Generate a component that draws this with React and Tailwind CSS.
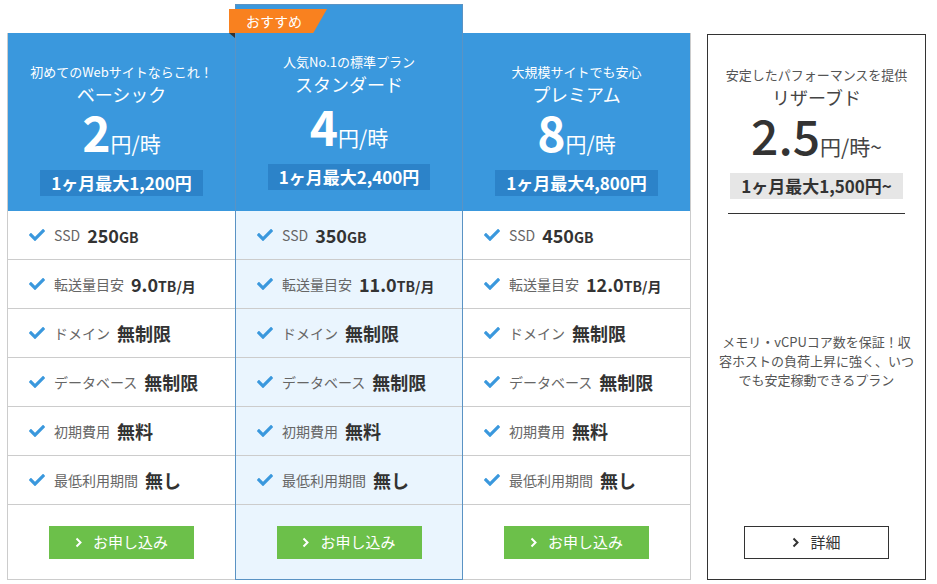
import React from 'react';
import { FaCheck } from 'react-icons/fa';

const plans = [
  { key: 'basic', sub: '初めてのWebサイトならこれ！', name: 'ベーシック', price: '2', month: '1,200', ssd: '250', transfer: '9.0' },
  { key: 'standard', sub: '人気No.1の標準プラン', name: 'スタンダード', price: '4', month: '2,400', ssd: '350', transfer: '11.0', featured: true },
  { key: 'premium', sub: '大規模サイトでも安心', name: 'プレミアム', price: '8', month: '4,800', ssd: '450', transfer: '12.0' },
];

function features(plan) {
  return [
    { label: 'SSD', value: plan.ssd, unit: 'GB' },
    { label: '転送量目安', value: plan.transfer, unit: 'TB/月' },
    { label: 'ドメイン', value: '無制限' },
    { label: 'データベース', value: '無制限' },
    { label: '初期費用', value: '無料' },
    { label: '最低利用期間', value: '無し' },
  ];
}

function Chevron({ className }) {
  return (
    <svg width="7" height="11" viewBox="0 0 7 11" className={className}>
      <polyline points="1.5,1.5 5.5,5.5 1.5,9.5" fill="none" stroke="currentColor" strokeWidth="2" />
    </svg>
  );
}

function PlanHeader({ plan }) {
  return (
    <div
      className={`flex flex-col items-center bg-[#3a98dd] text-white ${plan.featured ? 'h-[206px] pt-[47px]' : 'h-[178px] pt-[29px]'}`}
    >
      <p className="text-[13px] leading-[20px]">{plan.sub}</p>
      <p className="text-[18px] leading-[24px]">{plan.name}</p>
      <div className={`flex items-baseline ${plan.featured ? 'mt-[5px]' : 'mt-[1px]'}`}>
        <span className="text-[48px] leading-[48px] font-bold">{plan.price}</span>
        <span className="text-[21px] leading-none">円/時</span>
      </div>
      <div className="mt-[15px] h-[26px] px-[11px] bg-[#2c83c9] text-[17px] leading-[26px] font-bold">
        1ヶ月最大{plan.month}円
      </div>
    </div>
  );
}

function FeatureRow({ item }) {
  return (
    <div className="h-[49px] border-b border-[#cccccc] flex items-center pl-[21px]">
      <FaCheck className="text-[#3a98dd] w-[16px] h-[16px]" />
      <span className="ml-[9px] text-[14px] text-[#666666]">{item.label}</span>
      <span className="ml-[7px] text-[18px] font-bold text-[#333333]">
        {item.value}
        {item.unit && <span className="text-[14px]">{item.unit}</span>}
      </span>
    </div>
  );
}

function ApplyButton() {
  return (
    <div className="flex justify-center pt-[21px]">
      <div className="w-[145px] h-[33px] bg-[#6cc04a] text-white flex items-center justify-center text-[15px]">
        <Chevron className="mr-[11px]" />
        お申し込み
      </div>
    </div>
  );
}

function PlanCard({ plan, position }) {
  if (plan.featured) {
    return (
      <div className="relative z-10 w-[228px] h-[576px] border border-[#5a93c4] bg-[#eaf5fe]">
        <div className="absolute left-[-7px] top-[4px] w-[98px] h-[24px] bg-[#f9811f] text-white text-[14px] leading-[24px] pl-[17px] [clip-path:polygon(0_0,100%_0,86%_100%,0_100%)]">
          おすすめ
        </div>
        <div className="absolute left-[-7px] top-[28px] w-[6px] h-[5px] bg-[#333333] [clip-path:polygon(0_0,100%_0,100%_100%)]" />
        <PlanHeader plan={plan} />
        {features(plan).map(item => <FeatureRow key={item.label} item={item} />)}
        <ApplyButton />
      </div>
    );
  }
  return (
    <div className={`mt-[29px] w-[228px] h-[547px] bg-white border-b border-[#cccccc] ${position === 'left' ? 'border-l' : 'border-r'}`}>
      <PlanHeader plan={plan} />
      {features(plan).map(item => <FeatureRow key={item.label} item={item} />)}
      <ApplyButton />
    </div>
  );
}

function ReservedCard() {
  return (
    <div className="ml-[16px] mt-[30px] w-[219px] shrink-0 h-[546px] border border-[#333333] flex flex-col items-center pt-[30px] text-[#333333]">
      <p className="text-[13px] leading-[20px] text-[#555555]">安定したパフォーマンスを提供</p>
      <p className="text-[18px] leading-[24px] text-[#444444]">リザーブド</p>
      <div className="flex items-baseline mt-[1px]">
        <span className="text-[48px] leading-[48px] font-medium">2.5</span>
        <span className="text-[21px] leading-none text-[#444444]">円/時~</span>
      </div>
      <div className="mt-[15px] h-[26px] px-[11px] bg-[#e6e6e6] text-[17px] leading-[26px] font-bold">
        1ヶ月最大1,500円~
      </div>
      <div className="mt-[14px] w-[177px] h-px bg-[#333333]" />
      <p className="mt-[118px] text-[13px] leading-[19px] text-[#555555] text-center">
        メモリ・vCPUコア数を保証！収<br />
        容ホストの負荷上昇に強く、いつ<br />
        でも安定稼動できるプラン
      </p>
      <div className="mt-auto mb-[20px] w-[145px] h-[33px] border border-[#333333] flex items-center justify-center text-[15px]">
        <Chevron className="mr-[11px]" />
        詳細
      </div>
    </div>
  );
}

export default function App() {
  return (
    <div className="w-[937px] h-[584px] bg-white font-['Noto_Sans_CJK_JP','Noto_Sans',sans-serif] overflow-hidden">
      <div className="flex items-start pl-[7px] pt-[4px]">
        <PlanCard plan={plans[0]} position="left" />
        <PlanCard plan={plans[1]} />
        <PlanCard plan={plans[2]} position="right" />
        <ReservedCard />
      </div>
    </div>
  );
}
